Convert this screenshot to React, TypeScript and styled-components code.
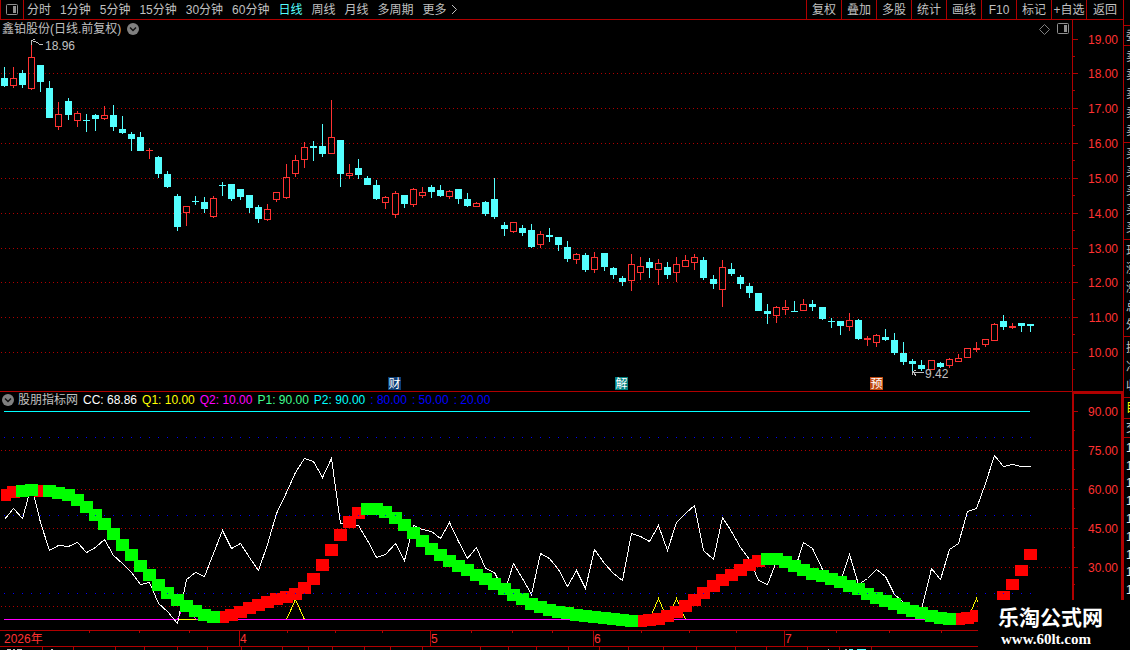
import React from "react";
import styled, { createGlobalStyle } from "styled-components";

const RED = "#b00000";
const UP = "#ff3232";
const DOWN = "#54ffff";
const GREY = "#c0c0c0";

const GlobalStyle = createGlobalStyle`
  html, body {
    margin: 0;
    background: #000;
  }
  * { box-sizing: border-box; }
  body, button {
    font-family: "Liberation Sans", "Noto Sans CJK SC", sans-serif;
    font-size: 12px;
    line-height: 16px;
    color: ${GREY};
  }
`;

const Screen = styled.div`
  position: relative;
  display: flex;
  overflow: hidden;
  background: #000;
`;

const Main = styled.main`
  flex: 1;
  min-width: 0;
`;

const Toolbar = styled.header`
  display: flex;
  justify-content: space-between;
  height: 20px;
  border-bottom: 1px solid ${RED};
`;

const Periods = styled.nav`
  display: flex;
  align-items: center;
  gap: 9px;
`;

const PlainButton = styled.button<{ $active?: boolean }>`
  display: flex;
  align-items: center;
  gap: 4px;
  padding: 0;
  border: 0;
  background: none;
  white-space: nowrap;
  color: ${(p) => (p.$active ? DOWN : GREY)};
`;

const PanelToggle = styled(PlainButton)`
  justify-content: center;
  width: 24px;
  height: 19px;
  margin-right: -6px;
  border: solid ${RED};
  border-width: 0 1px;
`;

const Actions = styled.nav`
  display: flex;
`;

const ActionButton = styled(PlainButton)<{ $wide?: boolean }>`
  justify-content: center;
  width: ${(p) => (p.$wide ? 37 : 35)}px;
  border-left: 1px solid ${RED};
`;

const Panel = styled.section`
  display: flex;
  border-bottom: 1px solid ${RED};
`;

const Plot = styled.div`
  flex: 1;
  min-width: 0;
`;

const PriceHeader = styled.div`
  display: flex;
  align-items: center;
  justify-content: space-between;
  height: 18px;
  padding: 0 3px 0 2px;
`;

const Group = styled.div<{ $gap: number }>`
  display: flex;
  align-items: center;
  gap: ${(p) => p.$gap}px;
`;

const IndicatorHeader = styled.div`
  display: flex;
  align-items: center;
  gap: 5px;
  height: 16px;
  padding-left: 2px;
  white-space: nowrap;
`;

const Reading = styled.span<{ $color: string }>`
  color: ${(p) => p.$color};
`;

const Drawing = styled.svg`
  display: block;
  width: 100%;
`;

const Scale = styled.svg`
  display: block;
  flex: none;
  width: 51px;
`;

const Sidebar = styled.aside`
  flex: none;
  width: 7px;
  padding-top: 25px;
  border-left: 1px solid ${RED};
  overflow: hidden;
`;

const SideSection = styled.div<{ $height: number; $color?: string }>`
  display: flex;
  flex-direction: column;
  justify-content: space-evenly;
  height: ${(p) => p.$height}px;
  padding-left: 2px;
  border-top: 1px solid ${RED};
  color: ${(p) => p.$color || GREY};
`;

const Brand = styled.div`
  position: absolute;
  right: 0;
  bottom: 0;
  width: 152px;
  height: 50px;
  padding: 6px 0 0 20px;
  background: #000;
  color: #fff;
  font-weight: bold;
`;

const BrandName = styled.div`
  font-size: 21px;
  line-height: 24px;
`;

const BrandSite = styled.div`
  padding-left: 3px;
  font-family: "Liberation Serif", serif;
  font-size: 15px;
  line-height: 18px;
`;

type Candle = ["r" | "c", number, number, number, number];

// colour, high, body top, body bottom, low
const candles: Candle[] = [
  ["c", 67, 78, 86, 87], ["r", 67, 78, 86, 88], ["c", 70, 73, 85, 88], ["r", 43, 57, 89, 90],
  ["c", 65, 65, 82, 92], ["c", 81, 88, 118, 118], ["r", 102, 114, 127, 130], ["c", 98, 101, 115, 120],
  ["r", 111, 113, 121, 127], ["c", 114, 120, 121, 132], ["c", 114, 115, 119, 131], ["r", 106, 115, 119, 120],
  ["c", 105, 115, 127, 131], ["c", 116, 129, 133, 134], ["c", 132, 134, 139, 151], ["c", 132, 137, 151, 151],
  ["r", 148, 150, 151, 159], ["c", 156, 157, 174, 178], ["c", 171, 174, 187, 188], ["c", 194, 196, 227, 231],
  ["r", 206, 206, 213, 226], ["c", 196, 201, 202, 205], ["c", 197, 202, 209, 213], ["r", 196, 198, 217, 218],
  ["c", 182, 185, 186, 196], ["c", 184, 184, 199, 201], ["c", 189, 189, 197, 200], ["c", 195, 195, 208, 213],
  ["c", 205, 207, 219, 223], ["r", 204, 209, 220, 221], ["r", 192, 192, 200, 202], ["r", 164, 177, 198, 199],
  ["r", 155, 160, 174, 177], ["r", 142, 147, 160, 168], ["c", 141, 146, 148, 161], ["c", 124, 146, 154, 157],
  ["r", 100, 137, 154, 154], ["c", 140, 140, 174, 187], ["r", 164, 173, 176, 179], ["c", 159, 168, 175, 179],
  ["c", 176, 178, 185, 185], ["c", 180, 185, 199, 200], ["r", 196, 197, 203, 209], ["r", 191, 193, 215, 218],
  ["c", 195, 195, 204, 208], ["r", 188, 189, 205, 207], ["r", 187, 192, 196, 198], ["c", 185, 187, 192, 198],
  ["c", 185, 190, 196, 197], ["r", 190, 191, 197, 199], ["c", 189, 189, 199, 204], ["c", 193, 199, 206, 207],
  ["r", 202, 203, 207, 207], ["c", 201, 202, 214, 216], ["c", 178, 199, 217, 219], ["c", 222, 225, 229, 236],
  ["r", 222, 222, 232, 233], ["c", 225, 228, 233, 236], ["c", 224, 230, 247, 248], ["r", 231, 234, 245, 248],
  ["c", 228, 235, 237, 242], ["c", 237, 237, 245, 251], ["c", 241, 247, 259, 262], ["r", 253, 254, 260, 264],
  ["c", 253, 255, 270, 272], ["r", 252, 257, 270, 273], ["c", 253, 253, 267, 271], ["c", 267, 268, 275, 279],
  ["c", 276, 278, 282, 286], ["r", 254, 264, 281, 291], ["r", 257, 266, 273, 280], ["c", 258, 262, 268, 278],
  ["r", 259, 263, 270, 285], ["c", 262, 267, 275, 279], ["r", 257, 264, 273, 282], ["r", 255, 260, 267, 267],
  ["r", 254, 257, 263, 270], ["c", 257, 260, 278, 280], ["c", 275, 279, 284, 289], ["r", 260, 267, 290, 307],
  ["c", 263, 269, 274, 276], ["c", 275, 277, 284, 289], ["c", 283, 286, 293, 298], ["c", 293, 293, 311, 311],
  ["c", 304, 311, 314, 324], ["r", 306, 307, 316, 323], ["r", 300, 307, 310, 315], ["c", 301, 311, 312, 312],
  ["r", 299, 304, 311, 311], ["c", 300, 304, 307, 311], ["c", 307, 307, 319, 320], ["c", 318, 321, 322, 328],
  ["c", 321, 321, 326, 335], ["r", 313, 320, 327, 331], ["c", 319, 320, 339, 340], ["r", 336, 338, 340, 346],
  ["r", 334, 335, 343, 347], ["c", 329, 337, 340, 341], ["c", 333, 340, 353, 355], ["c", 342, 353, 362, 365],
  ["c", 359, 361, 364, 372], ["c", 360, 365, 369, 371], ["r", 360, 360, 370, 370], ["c", 362, 363, 367, 368],
  ["r", 358, 359, 366, 368], ["r", 354, 358, 362, 362], ["r", 348, 348, 358, 358], ["r", 342, 348, 350, 352],
  ["r", 339, 339, 345, 347], ["r", 323, 324, 341, 341], ["c", 315, 321, 327, 330], ["r", 323, 326, 328, 329],
  ["c", 323, 323, 326, 332], ["c", 324, 324, 326, 332],
];

const oscillator = [
  519, 508, 518, 485, 522, 550, 545, 546, 542, 552, 547, 539, 555, 563, 572, 584, 582, 603, 611, 623,
  579, 572, 576, 553, 530, 548, 543, 557, 570, 544, 513, 492, 472, 458, 461, 477, 458, 523, 523, 525,
  540, 557, 554, 543, 560, 525, 529, 531, 538, 522, 541, 558, 547, 568, 572, 592, 563, 578, 594, 553,
  558, 569, 586, 570, 588, 549, 563, 573, 580, 533, 536, 541, 525, 550, 522, 513, 505, 550, 559, 517,
  531, 547, 559, 580, 584, 561, 563, 570, 542, 548, 569, 577, 581, 554, 584, 578, 569, 576, 594, 602,
  606, 609, 568, 579, 549, 543, 511, 508, 483, 455, 466, 464, 466, 466,
];

const trend = [
  489, 486, 485, 484, 485, 485, 487, 489, 494, 501, 509, 518, 528, 539, 549, 560, 569, 579, 587, 594,
  600, 605, 609, 611, 611, 609, 606, 602, 599, 596, 593, 591, 588, 582, 573, 559, 544, 529, 516, 507,
  503, 503, 506, 512, 519, 527, 535, 543, 549, 555, 560, 564, 569, 573, 578, 583, 589, 593, 598, 601,
  604, 606, 607, 609, 610, 611, 612, 613, 614, 615, 615, 614, 613, 610, 606, 600, 594, 587, 580, 574,
  569, 564, 559, 555, 553, 553, 556, 560, 564, 568, 570, 573, 576, 580, 583, 588, 592, 595, 598, 602,
  605, 607, 610, 612, 613, 613, 612, 610, 606, 601, 591, 579, 565, 549,
];

const isFalling = (i: number) =>
  i === 2 || i === 3 || (i >= 5 && i <= 23) || (i >= 40 && i <= 69) || (i >= 84 && i <= 104);

const barX = (i: number) => 4 + 9 * i + Math.floor((i + 5.2) / 11.85);
const toPoints = (pairs: number[][]) =>
  pairs.map(([i, y]) => `${barX(i) + 0.5},${y + 0.5}`).join(" ");

const priceLevels = [39, 73, 108, 143, 178, 213, 248, 282, 317, 352];
const indicatorLevels = [411, 450, 489, 528, 567, 606];

const periods = ["分时", "1分钟", "5分钟", "15分钟", "30分钟", "60分钟", "日线", "周线", "月线", "多周期"];
const actions = ["复权", "叠加", "多股", "统计", "画线", "F10", "标记", "+自选", "返回"];

const readings = [
  { text: "CC: 68.86", color: "#ffffff" },
  { text: "Q1: 10.00", color: "#ffff00" },
  { text: "Q2: 10.00", color: "#ff00ff" },
  { text: "P1: 90.00", color: "#40ff90" },
  { text: "P2: 90.00", color: "#00ffff" },
  { text: ": 80.00", color: "#0000ff" },
  { text: ": 50.00", color: "#0000ff" },
  { text: ": 20.00", color: "#0000ff" },
];

const badges = [
  { x: 388, label: "财", color: "#0c3c74" },
  { x: 615, label: "解", color: "#008080" },
  { x: 870, label: "预", color: "#c04a10" },
];

const months = [
  { x: 239, label: "4" },
  { x: 430, label: "5" },
  { x: 593, label: "6" },
  { x: 784, label: "7" },
];
const weekTicks = [89, 139, 189, 287, 335, 382, 471, 512, 552, 641, 689, 736, 836, 889, 941];
const statusTicks = [
  42, 73, 115, 144, 177, 207, 241, 282, 308, 332, 364, 390, 422, 480, 508, 536, 568, 599, 628, 663, 696,
  735, 766, 807, 839, 871,
];

const side = [
  { height: 20, items: ["委"] },
  { height: 97, items: ["卖", "卖", "卖", "卖", "卖"] },
  { height: 97, items: ["买", "买", "买", "买", "买"] },
  { height: 97, items: ["现", "涨", "涨", "总", "外"] },
  { height: 61, items: ["换", "净", "收"] },
  { height: 21, items: ["目"], color: "#ffff00" },
  { height: 19, items: ["交"] },
  { height: 163, items: ["1", "1", "1", "1", "1", "1", "1", "1", "1"], color: "#e8e8e8" },
];

function PanelIcon() {
  return (
    <svg width="12" height="12" viewBox="0 0 12 12" aria-hidden="true">
      <rect x="0.5" y="0.5" width="11" height="10" rx="1" fill="none" stroke="#909090" />
      <rect x="7" y="2" width="3" height="7" fill="#909090" />
    </svg>
  );
}

function RoundChevron() {
  return (
    <svg width="12" height="12" viewBox="0 0 12 12" aria-hidden="true">
      <circle cx="6" cy="6" r="6" fill="#808080" />
      <path d="M3 4.5L6 7.5L9 4.5" fill="none" stroke="#101010" strokeWidth="1.5" />
    </svg>
  );
}

function DottedLines({ id, top, levels }: { id: string; top: number; levels: number[] }) {
  return (
    <>
      <defs>
        <pattern id={id} x="1" y="0" width="4" height="1" patternUnits="userSpaceOnUse">
          <rect width="1" height="1" fill={RED} />
        </pattern>
      </defs>
      {levels.map((y) => (
        <rect key={y} x="1" y={y - top} width="100%" height="1" fill={`url(#${id})`} />
      ))}
    </>
  );
}

function CandleMark({ index, candle }: { index: number; candle: Candle }) {
  const [kind, high, top, bottom, low] = candle;
  const x = barX(index);
  const color = kind === "r" ? UP : DOWN;
  const hollow = kind === "r" && bottom - top > 2;
  return (
    <g fill={color}>
      {top > high && <rect x={x} y={high} width="1" height={top - high} />}
      {low > bottom && <rect x={x} y={bottom} width="1" height={low - bottom} />}
      {hollow ? (
        <rect x={x - 2.5} y={top + 0.5} width="6" height={bottom - top - 1} fill="none" stroke={color} />
      ) : (
        <rect x={x - 3} y={top} width="7" height={bottom - top} />
      )}
    </g>
  );
}

function PriceChart() {
  return (
    <Drawing height="353" shapeRendering="crispEdges" role="img" aria-label="日线走势">
      <DottedLines id="priceDots" top={38} levels={priceLevels.slice(1)} />
      <g transform="translate(0,-38)">
        {candles.map((c, i) => (
          <CandleMark key={i} index={i} candle={c} />
        ))}
        <path d="M43 44.5H40L37 42.5L31.5 40.5M31.5 44.5V40.5L35 39.5" fill="none" stroke={GREY} />
        <path d="M924 372.5H912.5M912.5 375V372L916 370M913 372L916 375.5" fill="none" stroke={GREY} />
        <g fill={GREY} fontSize="12">
          <text x="45" y="50">18.96</text>
          <text x="925" y="378">9.42</text>
        </g>
        {badges.map((b) => (
          <g key={b.label}>
            <rect x={b.x} y="377" width="13" height="13" fill={b.color} />
            <text x={b.x + 6.5} y="388" fontSize="12" fill="#fff" textAnchor="middle">
              {b.label}
            </text>
          </g>
        ))}
      </g>
    </Drawing>
  );
}

function TrendBlocks({ falling }: { falling: boolean }) {
  return (
    <g fill={falling ? "#00ff00" : "#ff0000"}>
      {trend.map((y, i) => {
        if (isFalling(i) !== falling) return null;
        const left = Math.max(1, barX(i) - 6);
        return <rect key={i} x={left} y={y} width={barX(i) + 7 - left} height={i > 108 ? 11 : 12} />;
      })}
    </g>
  );
}

function IndicatorChart() {
  return (
    <Drawing height="222" shapeRendering="crispEdges" role="img" aria-label="股朋指标网">
      <DottedLines id="indicatorDots" top={408} levels={indicatorLevels.slice(1)} />
      <g transform="translate(0,-408)">
        <rect x="4" y="411" width="1026" height="1" fill="#00ffff" />
        <rect x="4" y="619" width="1026" height="1" fill="#ff00ff" />
        <rect x="179" y="619" width="17" height="1" fill="#ffff00" />
        <g fill="none">
          <polyline points={toPoints(oscillator.map((y, i) => [i, y]))} stroke="#fff" />
          <polyline points={toPoints([[19, 619], [20, 598], [21, 619]])} stroke="#ff00ff" strokeDasharray="3 3" />
          <g stroke="#ffff00">
            <polyline points={toPoints([[31, 619], [32, 599], [33, 619]])} />
            <polyline points={toPoints([[71, 619], [72, 598], [73, 619], [74, 598], [75, 619]])} />
            <polyline points={toPoints([[106, 619], [107, 598], [108, 619]])} />
          </g>
        </g>
        <TrendBlocks falling={false} />
        <TrendBlocks falling />
        <g fill="#0000ff">
          {[437, 515, 593].map((y) =>
            candles.map((_, i) => <rect key={`${y}-${i}`} x={barX(i)} y={y} width="1" height="1" />)
          )}
        </g>
      </g>
    </Drawing>
  );
}

function ScaleMarks({ levels, first, step }: { levels: number[]; first: number; step: number }) {
  return (
    <>
      {levels.map((y, i) => (
        <g key={y}>
          <rect x="1" y={y} width="5" height="1" fill={RED} />
          <rect x="1" y={y + Math.floor(((levels[i + 1] ?? y + 35) - y) / 2)} width="2" height="1" fill={RED} />
          <text x="46" y={y + 5} fontSize="12" fill={UP} textAnchor="end">
            {(first - step * i).toFixed(2)}
          </text>
        </g>
      ))}
    </>
  );
}

export default function App() {
  return (
    <Screen>
      <GlobalStyle />
      <Main>
        <Toolbar>
          <Periods>
            <PanelToggle aria-label="侧栏">
              <PanelIcon />
            </PanelToggle>
            {periods.map((p) => (
              <PlainButton key={p} $active={p === "日线"}>
                {p}
              </PlainButton>
            ))}
            <PlainButton>
              更多
              <svg width="7" height="11" viewBox="0 0 7 11" aria-hidden="true">
                <path d="M1 1L5.5 5.5L1 10" fill="none" stroke={GREY} />
              </svg>
            </PlainButton>
          </Periods>
          <Actions>
            {actions.map((a) => (
              <ActionButton key={a} $wide={a === "返回"}>
                {a}
              </ActionButton>
            ))}
          </Actions>
        </Toolbar>

        <Panel>
          <Plot>
            <PriceHeader>
              <Group $gap={6}>
                <span>鑫铂股份(日线.前复权)</span>
                <PlainButton aria-label="展开">
                  <RoundChevron />
                </PlainButton>
              </Group>
              <Group $gap={7}>
                <PlainButton aria-label="标注">
                  <svg width="11" height="11" viewBox="0 0 11 11" aria-hidden="true">
                    <path d="M5.5 0.5L10.5 5.5L5.5 10.5L0.5 5.5Z" fill="none" stroke="#808080" />
                  </svg>
                </PlainButton>
                <PlainButton aria-label="面板">
                  <PanelIcon />
                </PlainButton>
              </Group>
            </PriceHeader>
            <PriceChart />
          </Plot>
          <Scale height="371">
            <rect width="1" height="371" fill={RED} />
            <g transform="translate(0,-20)">
              <ScaleMarks levels={priceLevels} first={19} step={1} />
            </g>
          </Scale>
        </Panel>

        <Panel>
          <Plot>
            <IndicatorHeader>
              <Group $gap={4}>
                <PlainButton aria-label="展开指标">
                  <RoundChevron />
                </PlainButton>
                <span>股朋指标网</span>
              </Group>
              {readings.map((r) => (
                <Reading key={r.text} $color={r.color}>
                  {r.text}
                </Reading>
              ))}
            </IndicatorHeader>
            <IndicatorChart />
          </Plot>
          <Scale height="238">
            <path d="M0 0H51V238H49V2H2V238H0Z" fill={RED} />
            <g transform="translate(0,-392)">
              <ScaleMarks levels={indicatorLevels.slice(0, 5)} first={90} step={15} />
            </g>
          </Scale>
        </Panel>

        <Drawing height="19" shapeRendering="crispEdges" role="img" aria-label="日期">
          <g fill={RED}>
            {weekTicks.map((x) => (
              <rect key={x} x={x} y="0" width="1" height="2" />
            ))}
            {months.map((m) => (
              <rect key={m.x} x={m.x} y="0" width="1" height="15" />
            ))}
            <rect y="15" width="100%" height="1" />
            {statusTicks.map((x) => (
              <rect key={x} x={x} y="16" width="1" height="3" />
            ))}
          </g>
          <g fill={UP} fontSize="12">
            <text x="4" y="12">2026年</text>
            {months.map((m) => (
              <text key={m.x} x={m.x + 1} y="12">
                {m.label}
              </text>
            ))}
          </g>
          <path d="M7 18.5H11M13 18.5H15M17 18.5H22M51 18.5H53M828 18.5H829M845 18.5H847" stroke={GREY} />
          <path d="M849 18.5H853M857 18.5H866" stroke={DOWN} />
        </Drawing>
      </Main>

      <Sidebar>
        {side.map((s, i) => (
          <SideSection key={i} $height={s.height} $color={s.color}>
            {s.items.map((t, n) => (
              <span key={n}>{t}</span>
            ))}
          </SideSection>
        ))}
      </Sidebar>

      <Brand>
        <BrandName>乐淘公式网</BrandName>
        <BrandSite>www.60lt.com</BrandSite>
      </Brand>
    </Screen>
  );
}
